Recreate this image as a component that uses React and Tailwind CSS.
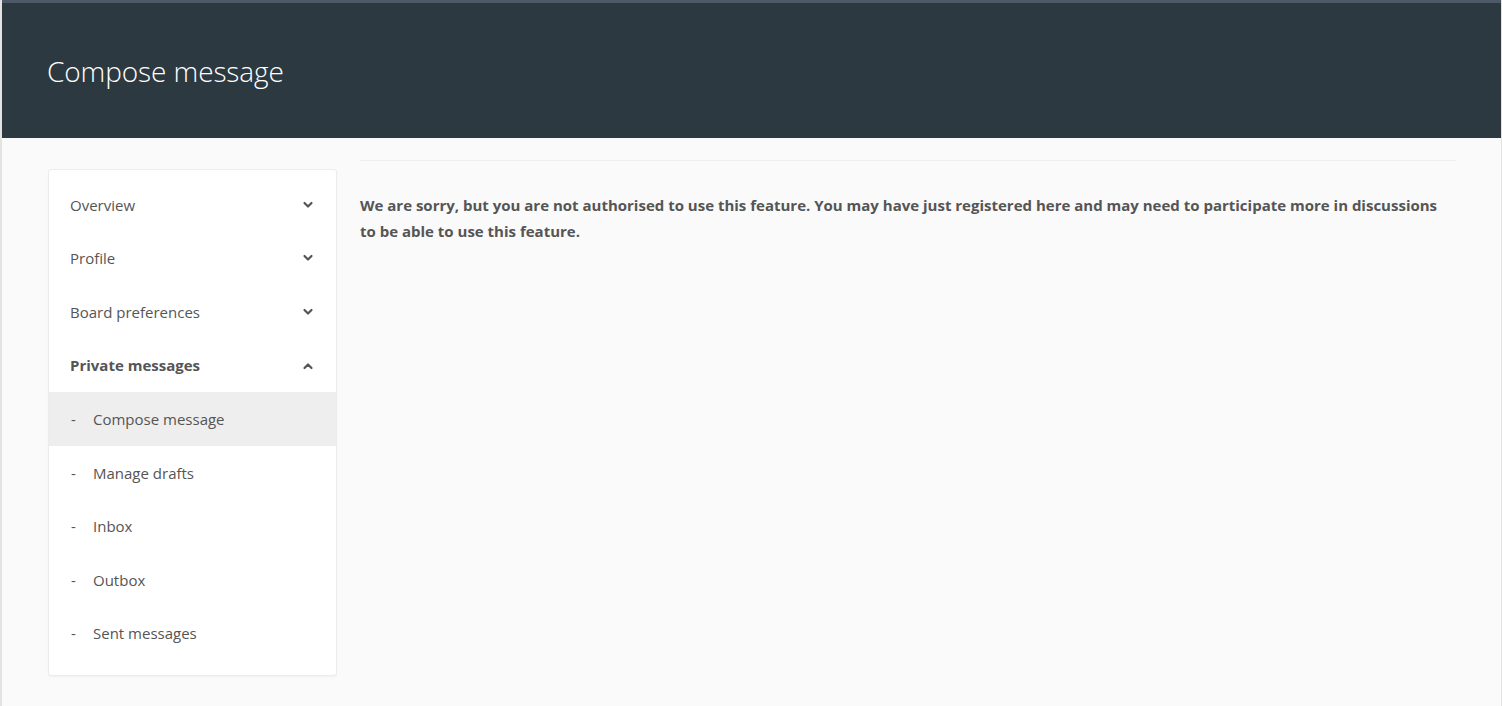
import React from "react";

const Chevron = ({ up }) => (
  <svg width="12" height="12" viewBox="0 0 12 12" className="text-[#555]">
    <path
      d={up ? "M2.5 8 L6 4.5 L9.5 8" : "M2.5 4 L6 7.5 L9.5 4"}
      fill="none"
      stroke="currentColor"
      strokeWidth="2.2"
      strokeLinecap="round"
      strokeLinejoin="round"
    />
  </svg>
);

const top = ["Overview", "Profile", "Board preferences"];
const sub = ["Compose message", "Manage drafts", "Inbox", "Outbox", "Sent messages"];

export default function App() {
  return (
    <div
      className="min-h-[706px] bg-[#fafafa] border-l-2 border-r border-[#e3e3e3] text-[#555]"
      style={{ fontFamily: '"Open Sans", "Noto Sans", sans-serif' }}
    >
      <header className="bg-[#2d3940] border-t-[3px] border-[#4b5a66] h-[138px] flex items-center pl-[45px]">
        <h1 className="text-[28px] font-light text-white tracking-[-0.1px] leading-none mt-[1px]">
          Compose message
        </h1>
      </header>
      <div className="flex gap-[23px] pl-[46px] pr-[45px] pt-[31px]">
        <nav className="w-[289px] shrink-0 bg-white border border-[#ececec] rounded-[3px] shadow-[0_1px_2px_rgba(0,0,0,0.04)] pt-2 pb-[15px] text-[15px] self-start">
          {top.map((t) => (
            <div key={t} className="h-[53.6px] flex items-center justify-between pl-[21px] pr-[22px]">
              <span>{t}</span>
              <Chevron />
            </div>
          ))}
          <div className="h-[53.6px] flex items-center justify-between pl-[21px] pr-[22px] font-bold">
            <span>Private messages</span>
            <Chevron up />
          </div>
          {sub.map((s, i) => (
            <div
              key={s}
              className={
                "h-[53.6px] flex items-center pl-[22px] " + (i === 0 ? "bg-[#eeeeee]" : "")
              }
            >
              <span className="w-[22px]">-</span>
              <span>{s}</span>
            </div>
          ))}
        </nav>
        <main className="flex-1">
          <div className="-mt-[9px] border-t border-[#eeeeee]" />
          <p className="mt-[31px] text-[15px] font-bold leading-[26px] text-[#555]">
            We are sorry, but you are not authorised to use this feature. You may have just registered here and may need to participate more in discussions to be able to use this feature.
          </p>
        </main>
      </div>
    </div>
  );
}
